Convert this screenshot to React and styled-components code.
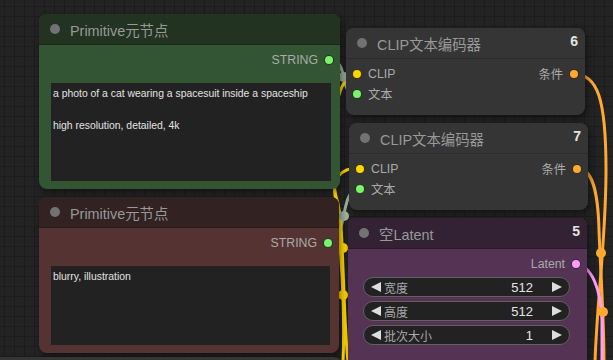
import React from 'react'
import styled, { createGlobalStyle } from 'styled-components'

const GlobalStyle = createGlobalStyle`
  html, body {
    margin: 0;
    padding: 0;
    background: #222;
  }
  * { box-sizing: border-box; }
`

const FONT = `"Liberation Sans", "Noto Sans CJK SC", Arial, sans-serif`

const Canvas = styled.div`
  position: relative;
  width: 613px;
  height: 360px;
  overflow: hidden;
  font-family: ${FONT};
  background-color: #232323;
  background-image:
    linear-gradient(to right, #1c1c1c 1px, transparent 1px),
    linear-gradient(to bottom, #1c1c1c 1px, transparent 1px);
  background-size: 10px 10px;
  background-position: 4px 6px;
`

const Links = styled.svg`
  position: absolute;
  left: 0;
  top: 0;
  width: 613px;
  height: 360px;
  pointer-events: none;
`

const Node = styled.div`
  position: absolute;
  left: ${p => p.$x}px;
  top: ${p => p.$y}px;
  width: ${p => p.$w}px;
  height: ${p => p.$h}px;
  background: ${p => p.$bg};
  border-radius: 8px;
  box-shadow: 2px 3px 6px rgba(0, 0, 0, 0.45);
  display: flex;
  flex-direction: column;
  overflow: hidden;
`

const Title = styled.div`
  height: 31px;
  flex: none;
  display: flex;
  align-items: center;
  gap: 10px;
  padding-left: 11px;
  background: ${p => p.$bg};
  border-bottom: 1px solid rgba(0, 0, 0, 0.18);
`

const TitleDot = styled.span`
  width: 10px;
  height: 10px;
  border-radius: 50%;
  background: #727272;
  flex: none;
`

const TitleText = styled.span`
  color: #999;
  font-size: 14.4px;
  white-space: nowrap;
`

const NodeId = styled.span`
  margin-left: auto;
  align-self: flex-start;
  padding: 5px 7px 0 0;
  color: #e4e4e4;
  font-weight: bold;
  font-size: 14px;
`

const Body = styled.div`
  flex: 1;
  display: flex;
  flex-direction: column;
  padding: ${p => p.$pad || '5px 6px'};
`

const Row = styled.div`
  height: 20px;
  display: flex;
  align-items: center;
  justify-content: ${p => (p.$end ? 'flex-end' : 'space-between')};
`

const Slot = styled.span`
  display: flex;
  align-items: center;
  gap: 6px;
  color: #aaa;
  font-size: 12.3px;
`

const Dot = styled.span`
  width: 10px;
  height: 10px;
  border-radius: 50%;
  background: ${p => p.$color};
  border: 1px solid rgba(0, 0, 0, 0.75);
  flex: none;
`

const TextBox = styled.div`
  flex: 1;
  margin: 13px 3px 0 0;
  background: #222;
  color: #e2e2e2;
  font-family: ${FONT};
  font-size: 10.4px;
  line-height: 16px;
  padding: 3px 2px 1px;
  white-space: pre-wrap;
`

const Widgets = styled.div`
  display: flex;
  flex-direction: column;
  gap: 4px;
  margin: 3px 11px 0 9px;
`

const Widget = styled.div`
  height: 20px;
  border-radius: 10px;
  background: #222;
  border: 1px solid #616161;
  display: flex;
  align-items: center;
  padding: 0 7px 0 7px;
`

const Arrow = styled.span`
  width: 0;
  height: 0;
  border-top: 5.5px solid transparent;
  border-bottom: 5.5px solid transparent;
  ${p => (p.$right ? 'border-left: 10px solid #ddd;' : 'border-right: 10px solid #ddd;')}
  flex: none;
`

const WLabel = styled.span`
  color: #aaa;
  font-size: 12px;
  margin-left: 3px;
  flex: 1;
`

const WValue = styled.span`
  color: #e6e6e6;
  font-size: 13px;
  margin-right: 19px;
`

const C = {
  clip: '#FFD500',
  cond: '#FFA931',
  latent: '#FF9CF9',
  string: '#9db19d',
  text: '#7BF36F',
}

const NodeTitle = ({ bg, children, id }) => (
  <Title $bg={bg}>
    <TitleDot />
    <TitleText>{children}</TitleText>
    {id && <NodeId>{id}</NodeId>}
  </Title>
)

const PrimitiveNode = ({ x, y, w, h, bg, titleBg, text }) => (
  <Node $x={x} $y={y} $w={w} $h={h} $bg={bg}>
    <NodeTitle bg={titleBg}>Primitive元节点</NodeTitle>
    <Body $pad="5px 6px 8px 12px">
      <Row $end>
        <Slot>
          STRING
          <Dot $color={C.text} />
        </Slot>
      </Row>
      <TextBox>{text}</TextBox>
    </Body>
  </Node>
)

const ClipNode = ({ x, y, id }) => (
  <Node $x={x} $y={y} $w={239} $h={87} $bg="#353535">
    <NodeTitle bg="#353535" id={id}>CLIP文本编码器</NodeTitle>
    <Body>
      <Row>
        <Slot>
          <Dot $color={C.clip} />
          CLIP
        </Slot>
        <Slot>
          条件
          <Dot $color={C.cond} />
        </Slot>
      </Row>
      <Row>
        <Slot>
          <Dot $color={C.text} />
          文本
        </Slot>
      </Row>
    </Body>
  </Node>
)

const latentWidgets = [
  { label: '宽度', value: 512 },
  { label: '高度', value: 512 },
  { label: '批次大小', value: 1 },
]

const LinkDot = ({ x, y, color }) => <circle cx={x} cy={y} r="5" fill={color} />

export default function App() {
  return (
    <>
      <GlobalStyle />
      <Canvas>
        <Links viewBox="0 0 613 360">
          <g fill="none" strokeWidth="3" strokeLinecap="round">
            <path d="M330 60 C350 60, 337 94, 357 94" stroke={C.string} />
            <path d="M328 243 C348 243, 339 189, 359 189" stroke={C.string} />
            <path d="M357 74 C327 74, 330 180, 337 200 S342 300, 348 362" stroke={C.clip} />
            <path d="M359 168 C339 168, 333 180, 335 195 S346 290, 343 362" stroke={C.clip} />
            <path d="M574 74 C598 74, 606 100, 606 170 C606 240, 597 300, 595 362" stroke={C.cond} />
            <path d="M577 168 C592 168, 598 190, 599 230 C601 280, 604 320, 604 362" stroke={C.cond} />
            <path d="M576 264 C592 266, 601 290, 602 320 L602 362" stroke={C.latent} />
          </g>
          <LinkDot x={343.5} y={77} color={C.string} />
          <LinkDot x={344} y={216} color={C.string} />
          <LinkDot x={343} y={248} color={C.clip} />
          <LinkDot x={343} y={295} color={C.clip} />
          <LinkDot x={601} y={253} color={C.cond} />
          <LinkDot x={603} y={312} color={C.cond} />
        </Links>

        <PrimitiveNode
          x={39}
          y={14}
          w={301}
          h={175}
          bg="#335533"
          titleBg="#223322"
          text={'a photo of a cat wearing a spacesuit inside a spaceship\n\nhigh resolution, detailed, 4k'}
        />
        <PrimitiveNode
          x={39}
          y={197}
          w={300}
          h={156}
          bg="#553333"
          titleBg="#332222"
          text="blurry, illustration"
        />

        <ClipNode x={346} y={28} id="6" />
        <ClipNode x={349} y={123} id="7" />

        <Node $x={348} $y={218} $w={239} $h={170} $bg="#553355">
          <NodeTitle bg="#332233" id="5">空Latent</NodeTitle>
          <Body>
            <Row $end>
              <Slot>
                Latent
                <Dot $color={C.latent} />
              </Slot>
            </Row>
            <Widgets>
              {latentWidgets.map(w => (
                <Widget key={w.label}>
                  <Arrow />
                  <WLabel>{w.label}</WLabel>
                  <WValue>{w.value}</WValue>
                  <Arrow $right />
                </Widget>
              ))}
            </Widgets>
          </Body>
        </Node>

        <Node $x={-12} $y={357} $w={354} $h={40} $bg="#353535" />
      </Canvas>
    </>
  )
}
